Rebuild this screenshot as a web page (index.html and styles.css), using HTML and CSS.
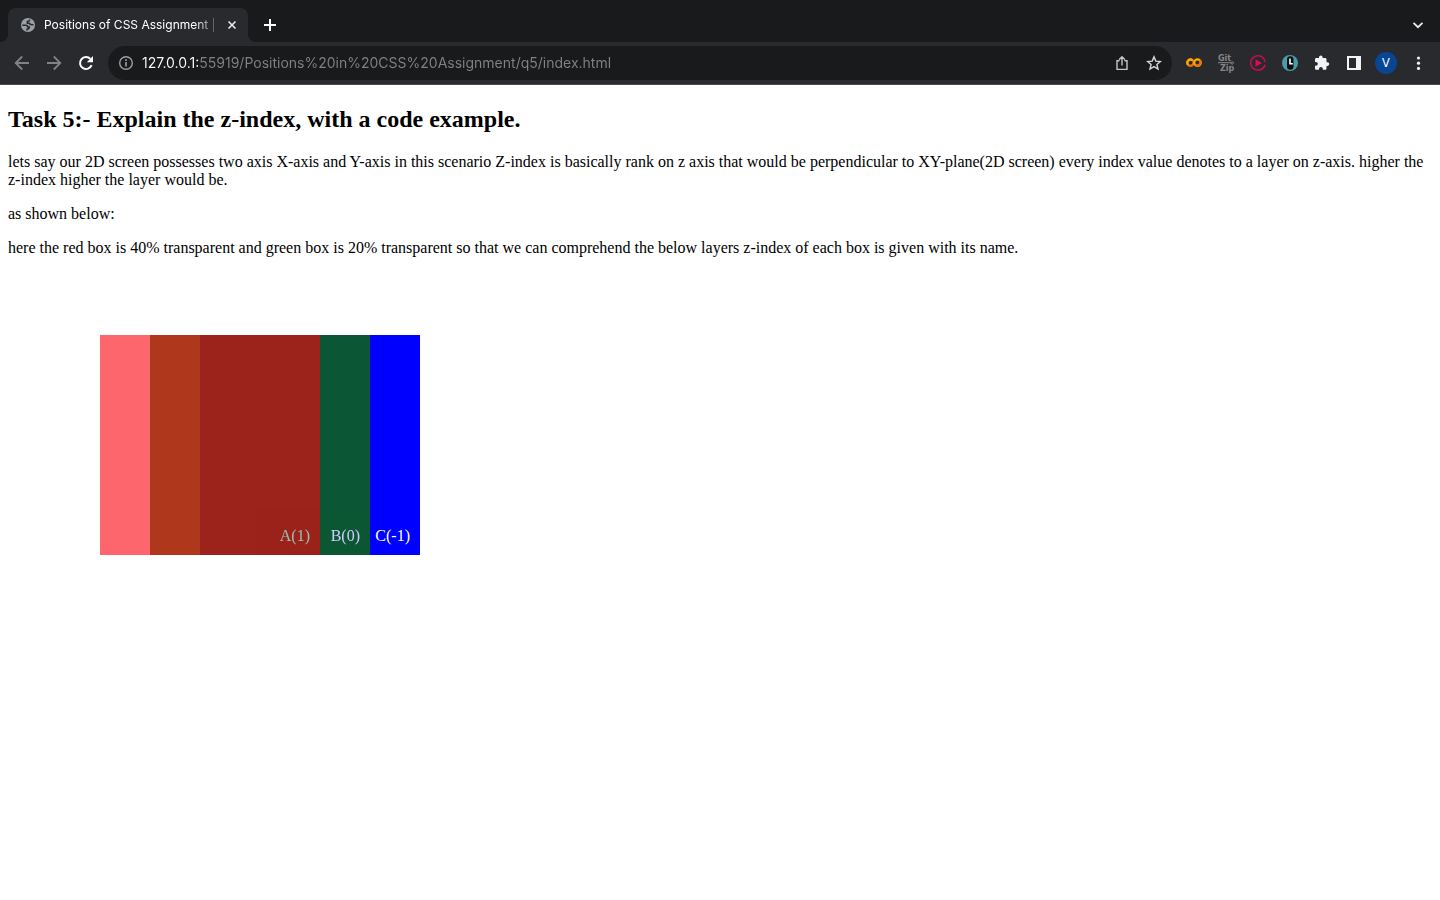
FILE: index.html
```
<!DOCTYPE html>
<html lang="en">
<head>
<meta charset="utf-8">
<title>Positions of CSS Assignment</title>
<link rel="stylesheet" href="styles.css">
</head>
<body>
<header class="browser">
  <div class="tabstrip">
    <div class="tab">
      <svg class="icon" viewBox="0 0 16 16" aria-hidden="true"><circle cx="8" cy="8" r="7" fill="#9aa0a6"/><path d="M2.300 8.300h3.200c1.500 0 2.200.6 2.300 1.700h1.500c0 1.800-.8 2-2.300 2.200v1.300M9.800 2.500c-.2 1.600-1 1.900-2.400 2v1.700h1.800c.6 1.300 1.500 1.600 2.400 1.600h1.900" fill="none" stroke="#292a2d" stroke-width="1.600"/></svg>
      <span class="tab-title">Positions of CSS Assignment |</span>
      <button class="tab-close" aria-label="Close tab"><svg class="icon" viewBox="0 0 16 16"><path d="M4.500 4.500l7 7M11.500 4.500l-7 7" stroke="#e8eaed" stroke-width="1.600"/></svg></button>
    </div>
    <button class="tool" aria-label="New tab"><svg class="icon" viewBox="0 0 16 16"><path d="M8 2v12M2 8h12" stroke="#fff" stroke-width="2"/></svg></button>
    <button class="tool tab-search" aria-label="Search tabs"><svg class="icon" viewBox="0 0 16 16"><path d="M3.500 5.800L8 10.200l4.500-4.400" fill="none" stroke="#e8eaed" stroke-width="1.800"/></svg></button>
  </div>
  <nav class="toolbar" aria-label="Browser toolbar">
    <button class="tool" aria-label="Back"><svg class="icon" viewBox="0 0 16 16"><path d="M15 8H2M8.200 1.500L1.700 8l6.500 6.500" fill="none" stroke="#808286" stroke-width="1.800"/></svg></button>
    <button class="tool" aria-label="Forward"><svg class="icon" viewBox="0 0 16 16"><path d="M1 8h13M7.800 1.500L14.300 8l-6.500 6.500" fill="none" stroke="#808286" stroke-width="1.800"/></svg></button>
    <button class="tool" aria-label="Reload"><svg class="icon" viewBox="0 0 16 16"><path d="M13.600 10.200A6 6 0 1 1 12.400 3.900" fill="none" stroke="#fff" stroke-width="2"/><path d="M15 1v6.200H8.800z" fill="#fff"/></svg></button>
    <div class="omnibox">
      <button class="tool" aria-label="Site information"><svg class="icon" viewBox="0 0 16 16"><circle cx="8" cy="8" r="6.300" fill="none" stroke="#9aa0a6" stroke-width="1.400"/><path d="M8 7v4.500M8 4.300v1.600" stroke="#9aa0a6" stroke-width="1.600"/></svg></button>
      <input class="url" type="text" aria-label="Address" value="127.0.0.1:55919/Positions%20in%20CSS%20Assignment/q5/index.html">
      <button class="tool" aria-label="Share"><svg class="icon" viewBox="0 0 16 16"><path d="M5.500 5.800H3v8.600h10V5.800h-2.500M8 10.500V2M5 4.700l3-3 3 3" fill="none" stroke="#c4c7c5" stroke-width="1.400"/></svg></button>
      <button class="tool" aria-label="Bookmark"><svg class="icon" viewBox="0 0 16 16"><path d="M8 1.900l1.800 4.200 4.600.4-3.500 3 1.100 4.500L8 11.600 4 14l1.100-4.500-3.500-3 4.600-.4z" fill="none" stroke="#d5d7da" stroke-width="1.400"/></svg></button>
    </div>
    <div class="extensions">
      <button class="tool" aria-label="Colab"><svg class="icon" viewBox="0 0 16 16"><g fill="none" stroke-width="2.200"><circle cx="4.400" cy="7.600" r="3.200" stroke="#e8710a"/><path d="M2.200 9.900a3.200 3.200 0 0 1 4.400-4.600" stroke="#f9ab00"/><circle cx="11.500" cy="7.600" r="3.300" stroke="#f9ab00"/><path d="M9.200 9.900a3.300 3.300 0 0 0 4.600-4.600" stroke="#e8710a"/></g></svg></button>
      <button class="tool" aria-label="GitZip"><svg class="icon gitzip" viewBox="0 0 16 16"><text x="0" y="6">Git</text><text x="2" y="16">Zip</text><path d="M0 7.700h13.500" stroke="#858585"/><circle cx="14.200" cy="8" r="1.200" fill="#292a2d" stroke="#858585"/></svg></button>
      <button class="tool" aria-label="Video player"><svg class="icon" viewBox="0 0 16 16"><path d="M13.800 12.200A7.200 7.200 0 1 1 15.100 7M10.500 14.800a7 7 0 0 0 4.600-5" fill="none" stroke="#c40f49" stroke-width="1.500"/><path d="M5.500 4.300L12 8l-6.500 3.700z" fill="#d90d50"/></svg></button>
      <button class="tool" aria-label="Timer"><svg class="icon" viewBox="0 0 16 16"><circle cx="8" cy="8" r="8" fill="#4b9caa"/><rect x="5" y="1.300" width="6.500" height="13.400" rx="3.200" fill="#101010"/><path d="M8 3.500v5.200h2.800" fill="none" stroke="#fff" stroke-width="1.600"/></svg></button>
      <button class="tool" aria-label="Extensions"><svg class="icon" viewBox="0 0 16 16"><path d="M13.500 7.300h-1V4.500c0-.8-.6-1.400-1.400-1.400H8.600V2.200a1.800 1.800 0 0 0-3.600 0v.9H2.400C1.600 3.100 1 3.700 1 4.500v2.400h.9a1.900 1.900 0 0 1 0 3.900H1v2.600c0 .8.600 1.400 1.400 1.400H5v-1a1.900 1.900 0 0 1 3.800 0v1h2.300c.8 0 1.400-.6 1.400-1.400v-2.500h1a1.800 1.800 0 0 0 0-3.600z" fill="#f1f3f4"/></svg></button>
      <button class="tool" aria-label="Side panel"><svg class="icon" viewBox="0 0 16 16"><path d="M1 1h14v14H1zM3 3v10h7V3z" fill="#f1f3f4" fill-rule="evenodd"/></svg></button>
      <button class="tool avatar" aria-label="Profile">V</button>
      <button class="tool" aria-label="Menu"><svg class="icon" viewBox="0 0 16 16"><circle cx="8.500" cy="3" r="1.600" fill="#f1f3f4"/><circle cx="8.500" cy="8.200" r="1.600" fill="#f1f3f4"/><circle cx="8.500" cy="13.400" r="1.600" fill="#f1f3f4"/></svg></button>
    </div>
  </nav>
</header>
<main class="page">
  <h2>Task 5:- Explain the z-index, with a code example.</h2>
  <p>lets say our 2D screen possesses two axis X-axis and Y-axis in this scenario Z-index is basically rank on z axis that would be perpendicular to XY-plane(2D screen) every index value denotes to a layer on z-axis. higher the z-index higher the layer would be.</p>
  <p>as shown below:</p>
  <p>here the red box is 40% transparent and green box is 20% transparent so that we can comprehend the below layers z-index of each box is given with its name.</p>
  <div class="stage">
    <div class="box box-a">A(1)</div>
    <div class="box box-b">B(0)</div>
    <div class="box box-c">C(-1)</div>
  </div>
</main>
</body>
</html>
```
FILE: styles.css
```
* { box-sizing: border-box; }
body { margin: 0; background: #fff; color: #000; font-family: "Liberation Serif", serif; font-size: 16px; line-height: 18px; }
button { border: 0; padding: 0; background: none; font: inherit; color: inherit; }
.browser { background: #292a2d; font-family: Inter, sans-serif; color: #fff; border-bottom: 1px solid #4a4b4e; }
.icon { display: block; width: 16px; height: 16px; flex: none; }
.tool { display: flex; align-items: center; justify-content: center; width: 32px; height: 32px; flex: none; }

.tabstrip { display: flex; align-items: center; height: 42px; padding: 8px 6px 0 8px; background: #191a1c; }
.tab { position: relative; display: flex; align-items: center; gap: 8px; width: 240px; height: 34px; padding: 0 8px 0 12px; border-radius: 8px 8px 0 0; background: #292a2d; }
.tab::before, .tab::after { content: ""; position: absolute; bottom: 0; width: 8px; height: 8px; }
.tab::before { right: 100%; background: radial-gradient(circle at 0 0, #191a1c 8px, #292a2d 8px); }
.tab::after { left: 100%; background: radial-gradient(circle at 100% 0, #191a1c 8px, #292a2d 8px); }
.tab-title { flex: 1; white-space: nowrap; font-size: 12px; line-height: 16px; mask-image: linear-gradient(to right, #000 150px, transparent 178px); }
.tab + .tool { margin-left: 6px; }
.tab-search { margin-left: auto; }

.toolbar { display: flex; align-items: center; height: 42px; padding: 0 6px; }
.omnibox { display: flex; align-items: center; flex: 1; height: 34px; margin-left: 6px; padding: 0 2px; border-radius: 17px; background: #191a1c; }
.url { flex: 1; min-width: 0; height: 20px; padding: 0; border: 0; outline: 0; font: 14px/20px Inter, sans-serif; color: transparent; background: linear-gradient(to right, #fff 57px, #808286 57px); background-clip: text; }
.extensions { display: flex; margin-left: 6px; }
.gitzip { overflow: visible; }
.gitzip text { font: 700 8px "DejaVu Sans", sans-serif; fill: #858585; }
.avatar { width: 22px; height: 22px; margin: 5px; border-radius: 50%; background: #084694; font-size: 12px; }

.page { padding: 20px 8px; }
.page h2 { margin: 0 0 20px; font-size: 24px; line-height: 28px; }
.page p { margin: 0 0 16px; }
.stage { position: relative; isolation: isolate; height: 220px; margin: 78px 0 0 92px; }
.box { position: absolute; display: flex; align-items: flex-end; justify-content: flex-end; width: 220px; height: 220px; padding: 10px; color: #fff; }
.box-a { left: 0; z-index: 1; background: #fb000a; opacity: 0.6; }
.box-b { left: 50px; z-index: 0; background: #0e6d02; opacity: 0.8; }
.box-c { left: 100px; z-index: -1; background: #0000ff; }
```
